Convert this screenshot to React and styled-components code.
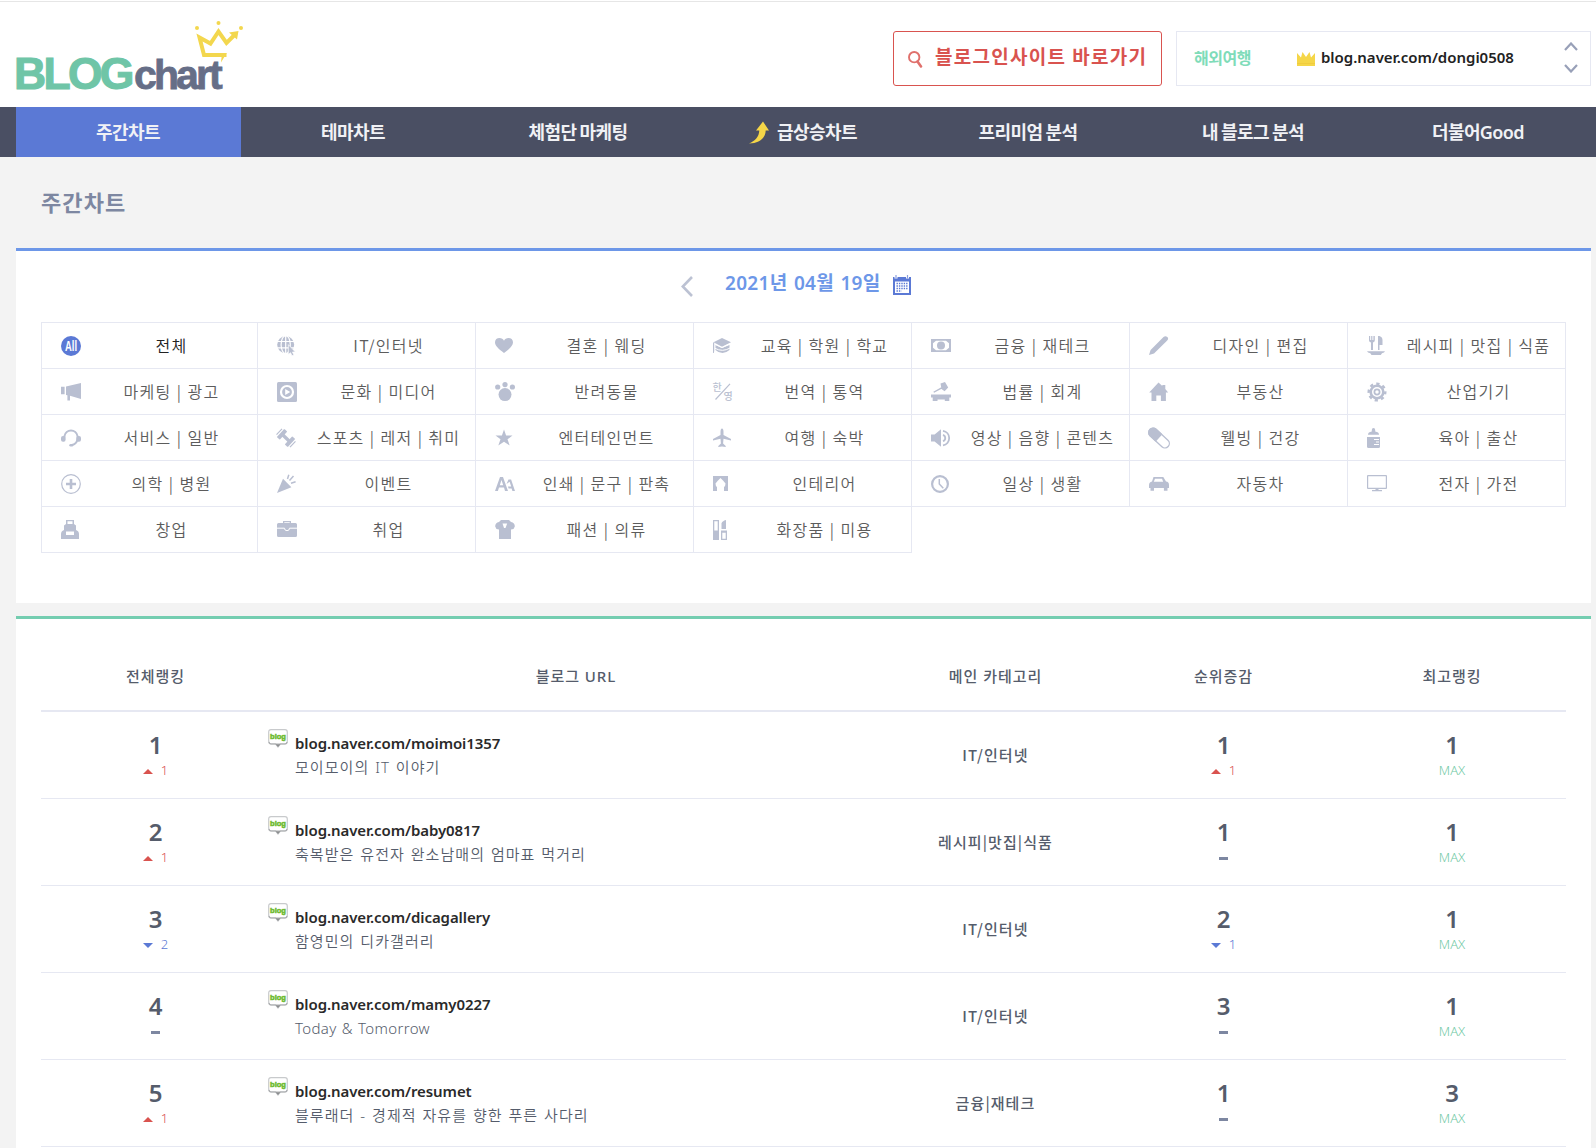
import React from "react";
import styled, { createGlobalStyle, css } from "styled-components";

const GlobalStyle = createGlobalStyle`
  * { box-sizing: border-box; }
  html, body { margin: 0; padding: 0; background: #f3f3f3; overflow: hidden; }
  body { font-family: "Noto Sans", "Noto Sans CJK KR", sans-serif; color: #555c6b; }
`;

const Page = styled.div`
  width: 1596px;
  height: 1148px;
  overflow: hidden;
`;

/* ---------- header ---------- */

const Header = styled.header`
  height: 107px;
  background: #fff;
  padding: 0 5px 0 10px;
  display: flex;
  justify-content: space-between;
  box-shadow: inset 0 1px 0 #fff, inset 0 2px 0 #e6e6e6;
`;

const Logo = styled.svg`
  display: block;
  width: 240px;
  height: 86px;
  margin-top: 16px;
  font-family: "Liberation Sans", Arial, sans-serif;
  font-weight: 700;
`;

const LogoBlog = styled.text`
  font-size: 44.5px;
  letter-spacing: -2.7px;
  fill: #6fc5a7;
  stroke: #6fc5a7;
  stroke-width: 1.1px;
`;

const LogoChart = styled.text`
  font-size: 41px;
  letter-spacing: -2.9px;
  fill: #666e87;
  stroke: #666e87;
  stroke-width: 0.8px;
`;

const HeaderTools = styled.div`
  display: flex;
  gap: 14px;
  padding-top: 31px;
`;

const InsightButton = styled.a`
  width: 269px;
  height: 55px;
  border: 1px solid #d9534f;
  border-radius: 3px;
  display: flex;
  align-items: center;
  padding-left: 14px;
  color: #d9534f;
  font-size: 19px;
  font-weight: 600;
  letter-spacing: 1.25px;
  white-space: nowrap;

  svg { margin: 2px 12px 0 0; }
  span { line-height: 24px; margin-bottom: 3px; }
`;

const Ticker = styled.div`
  width: 415px;
  height: 55px;
  border: 1px solid #e6e8f2;
  display: flex;
  align-items: center;
  padding: 0 12px 3px 17px;

  > svg { margin-top: 3px; }
`;

const TickerCategory = styled.span`
  width: 103px;
  color: #7fdcb9;
  font-size: 16px;
  font-weight: 700;
  letter-spacing: -0.5px;
`;

const TickerUrl = styled.a`
  flex: 1;
  margin: 0 0 1px 6px;
  color: #222;
  font-size: 15px;
  font-weight: 600;
  letter-spacing: -0.02px;
`;

const TickerArrows = styled.div`
  display: flex;
  flex-direction: column;
  gap: 13px;
`;

/* ---------- navigation ---------- */

const Nav = styled.nav`
  height: 50px;
  background: #4a4f63;
  padding: 0 5px 0 16px;
  display: flex;
`;

const NavItem = styled.a`
  width: 225px;
  height: 50px;
  display: flex;
  align-items: center;
  justify-content: center;
  gap: 8px;
  padding: 0 1px 2px 0;
  background: ${(p) => (p.$active ? "#5b79d5" : "transparent")};
  color: #f0f1f5;
  font-size: 18px;
  font-weight: 600;
  letter-spacing: -0.6px;
  word-spacing: -1px;
  white-space: nowrap;

  svg { margin-top: 2px; }
`;

/* ---------- content ---------- */

const Title = styled.h1`
  margin: 0;
  height: 91px;
  padding: 29px 0 0 41px;
  color: #7d87a1;
  font-size: 22px;
  line-height: 32px;
  font-weight: 600;
  letter-spacing: 1.1px;
`;

const Card = styled.section`
  width: 1575px;
  margin-left: 16px;
  background: #fff;
  border-top: 3px solid ${(p) => p.$accent};
  padding: 0 25px 40px 25px;
`;

const FilterCard = styled(Card)`
  height: 355px;
  margin-bottom: 13px;
`;

const DateBar = styled.div`
  height: 71px;
  display: flex;
  justify-content: center;
  padding: 17px 15px 0 0;
`;

const DateText = styled.span`
  width: 155px;
  margin: 1px 13px 0 32px;
  color: #6d97e8;
  font-size: 19px;
  line-height: 28px;
  font-weight: 600;
  letter-spacing: 0.3px;
  word-spacing: 1.2px;
  white-space: nowrap;
`;

const BarIcon = styled.span`
  margin-top: ${(p) => p.$top}px;
  line-height: 0;
`;

const CategoryGrid = styled.div`
  display: grid;
  grid-template-columns: 217px repeat(6, 218px);
  grid-template-rows: 47px;
  grid-auto-rows: 46px;
`;

const line = "1px solid #e6e8f2";

const Category = styled.a`
  display: flex;
  align-items: center;
  border-right: ${line};
  border-bottom: ${line};
  ${(p) => p.$top && css`border-top: ${line};`}
  ${(p) => p.$first && css`border-left: ${line};`}
  padding-left: 19px;
  color: ${(p) => (p.$active ? "#222" : "#5c5c5c")};
`;

const CategoryLabel = styled.span`
  flex: 1;
  margin-left: 5px;
  padding-bottom: 2px;
  text-align: center;
  font-family: "Noto Sans CJK KR", sans-serif;
  font-size: 16px;
  font-weight: 350;
  letter-spacing: 1.25px;
  word-spacing: 0.4px;
  white-space: nowrap;
`;

/* ---------- ranking table ---------- */

const Row = styled.div`
  display: grid;
  grid-template-columns: 229px 612px 227px 229px 228px;
  height: 87px;
  border-bottom: ${line};
`;

const HeadRow = styled(Row)`
  height: 93px;
  padding-top: 22px;
  align-items: center;
  border-bottom: 2px solid #e6e8f2;
  font-size: 15px;
  font-weight: 500;
  letter-spacing: 0.95px;
  text-align: center;
`;

const Stat = styled.div`
  padding-top: 21px;
  text-align: center;
`;

const StatValue = styled.div`
  font-size: 24px;
  line-height: 24px;
  font-weight: 600;
`;

const tones = { up: "#d9534f", down: "#5b79d5", max: "#6fc9a4", same: "#7d87a1" };

const StatNote = styled.div`
  display: flex;
  align-items: center;
  justify-content: center;
  gap: 8px;
  height: 24px;
  margin-top: 1px;
  font-size: 13px;
  font-weight: 300;
  color: ${(p) => tones[p.$tone]};
`;

const Triangle = styled.i`
  border: 5px solid transparent;
  border-top-width: ${(p) => (p.$down ? "5px" : "0")};
  border-bottom-width: ${(p) => (p.$down ? "0" : "5px")};
  border-top-color: ${(p) => (p.$down ? "currentColor" : "transparent")};
  border-bottom-color: ${(p) => (p.$down ? "transparent" : "currentColor")};
  margin-top: 3px;
`;

const Dash = styled.i`
  width: 9px;
  height: 3px;
  background: currentColor;
  margin-top: 3px;
`;

const BlogCell = styled.div`
  display: flex;
  gap: 7px;
  padding-top: 17px;
  margin-left: -2px;
`;

const BlogText = styled.div`
  padding-top: 2px;
`;

const BlogUrl = styled.div`
  color: #2a2a2a;
  font-size: 15px;
  line-height: 24px;
  font-weight: 600;
  letter-spacing: -0.08px;
`;

const BlogTitle = styled.div`
  font-size: 15px;
  line-height: 24px;
  font-weight: 350;
  letter-spacing: ${(p) => (p.$latin ? "0.35px" : "1.06px")};
  word-spacing: 0.9px;
`;

const MainCategory = styled.div`
  align-self: center;
  padding-bottom: 2px;
  text-align: center;
  font-family: "Noto Sans CJK KR", sans-serif;
  font-size: 15px;
  font-weight: 500;
  letter-spacing: 1.1px;
`;

/* ---------- icons ---------- */

const W = "#fff";
const glyphs = {
  all: (
    <>
      <circle cx="10" cy="10" r="10" fill="#5b79d5" />
      <text x="10" y="15.3" fill={W} fontSize="15" textAnchor="middle" textLength="12" lengthAdjust="spacingAndGlyphs" fontFamily="Liberation Sans" fontWeight="700">All</text>
    </>
  ),
  globe: (
    <>
      <circle cx="8.7" cy="8.7" r="8.5" />
      <g stroke={W} fill="none" strokeWidth="1.2">
        <path d="M8.7 0v18M0 5.5h18M0 11.8h18" />
        <ellipse cx="8.7" cy="8.7" rx="4.6" ry="9" />
      </g>
      <path d="M11.3 8.6v10l2.2-1.9 1.5 3.1 1.9-.9-1.4-2.9h2.9z" stroke={W} strokeWidth=".7" />
    </>
  ),
  heart: <path d="M9 17C4 13 0 10 0 6.200C0 3.600 2 2 4.500 2C6.500 2 8.200 3 9 4.800C9.800 3 11.500 2 13.500 2C16 2 18 3.600 18 6.200C18 10 14 13 9 17Z" />,
  cap: (
    <>
      <path d="M9 2 18 6.300 9 10.800.5 6.300Z" />
      <path d="M2.500 10.500V9L9 12l7.500-3v5Q13 17 9.500 17 5.500 17 2.500 14z" />
      <path d="M1 7.700 9 11.600 17 7.700M2 12.300Q9.500 16.500 17 12" stroke={W} strokeWidth="1" fill="none" />
      <path d="M0 6.500h1.200V15l-.4 2H0z" />
    </>
  ),
  money: (
    <>
      <path d="M0 3h20v13H0z" />
      <path d="M5 4.800h10l3 2.500v4.400l-3 2.500H5l-3-2.500V7.300z" fill={W} />
      <circle cx="10" cy="9.500" r="4" />
    </>
  ),
  pencil: <path d="M0 19 1.600 14 14.500 1Q16.500-.6 18.300 1T18 4.700L5 17.400Z" />,
  meal: (
    <path d="M2 0h1.200v4h1V0h1.200v4h1V0h1.400v4.500Q7.800 6 6 6.600V14H4V6.600Q2 6 2 4.500zM11 0h1.500v14H11zM12.500 0Q15.500 1 15.500 4v5h-3zM0 15.300h18Q17.500 17 15 17.300L13.800 19H4.500L3.300 17.300Q.5 17 0 15.300z" />
  ),
  megaphone: <path d="M0 4.800h3.600v7.400H0zM5 4.400 20 .9v16L9 13.800v4.800H6.400v-5.300L5 13z" />,
  media: (
    <>
      <rect width="20" height="20" rx="1.500" />
      <circle cx="10" cy="10" r="6" fill="none" stroke={W} strokeWidth="2.200" />
      <path d="M8.200 7v6l5-3z" fill={W} />
    </>
  ),
  paw: (
    <>
      <circle cx="10" cy="12.600" r="6.500" />
      <circle cx="2.700" cy="5" r="2.600" />
      <circle cx="10" cy="2.600" r="2.600" />
      <circle cx="17.400" cy="5" r="2.600" />
    </>
  ),
  translate: (
    <>
      <text x="-.5" y="9" fontSize="10" fontWeight="500" fontFamily="Noto Sans CJK KR">한</text>
      <text x="10.500" y="18" fontSize="10" fontWeight="500" fontFamily="Noto Sans CJK KR">영</text>
      <path d="M2.500 17.500 17 1.800" stroke="currentColor" strokeWidth="1.200" />
    </>
  ),
  gavel: (
    <>
      <path d="M0 12.500h20v3h-1.700V19h-4.500v-1.600H6.500V19H1.700v-3.500H0z" />
      <path d="m2.300 9.800 8-4.500.8 1.300-8 4.200zM9.500 1.500 14 0l3.200 5.500-3.600 3.800L10.500 7z" />
    </>
  ),
  house: <path d="M9.500.5 13.300 4V2.900h3V7l2.900 3.600h-2.300V19h-5v-5.600H7.300V19H2.500v-8.400H.2z" />,
  gear: (
    <>
      <circle cx="10" cy="10" r="6.300" fill="none" stroke="currentColor" strokeWidth="2.600" />
      <circle cx="10" cy="10" r="8.300" fill="none" stroke="currentColor" strokeWidth="2.400" strokeDasharray="3.260 3.260" strokeDashoffset="1" />
      <circle cx="10" cy="10" r="2.600" fill="none" stroke="currentColor" strokeWidth="1.700" />
    </>
  ),
  headset: (
    <>
      <path d="M3.500 9.500V8a6.600 6.600 0 0 1 13 0v2q0 6-5.500 7" fill="none" stroke="currentColor" strokeWidth="1.900" />
      <rect x="0" y="8" width="4.600" height="5.800" rx="2" />
      <rect x="15.400" y="8" width="4.600" height="5.800" rx="2" />
      <rect x="8.300" y="16" width="4" height="2.600" rx="1.300" />
    </>
  ),
  dumbbell: (
    <g transform="rotate(43 9 10)">
      <rect x="4" y="8.300" width="10" height="3.400" />
      <rect x="1.600" y="4.500" width="4" height="11" rx=".6" />
      <rect x="12.400" y="4.500" width="4" height="11" rx=".6" />
      <path d="M-.2 6v8M18.200 6v8" stroke="currentColor" strokeWidth="1.200" />
    </g>
  ),
  star: <path d="m9 1.500 2.100 6h6.400l-5 3.800 2.200 6.200L9 13.700 3.300 17.500l2.200-6.200-5-3.800h6.400z" />,
  plane: <path d="M9 .4q1.500 0 1.500 3.600v3l7.500 4v1.400l-7.500-1.600-.4 4.700 2.600 2.500v1.100L9 18.500l-3.700.6V18l2.600-2.500-.4-4.700L0 12.400V11l7.500-4V4Q7.500.4 9 .4z" />,
  speaker: (
    <>
      <path d="M0 6.500h3.600L10 1.200v17.600L3.600 13.500H0z" />
      <path d="M12 2.800a7.400 7.400 0 0 1 0 14.600" fill="none" stroke="currentColor" strokeWidth="1.800" />
      <path d="M12 6.800a3.400 3.400 0 0 1 0 6.400" fill="none" stroke="currentColor" strokeWidth="1.800" />
    </>
  ),
  pill: (
    <g transform="rotate(43 10 10)">
      <rect x="-2.500" y="5.600" width="25" height="8.800" rx="4.400" fill="none" stroke="currentColor" strokeWidth="1.300" />
      <path d="M1.900 5H10v10H1.900a5 5 0 0 1 0-10z" />
    </g>
  ),
  bottle: (
    <>
      <path d="M4.800 2Q4.800 0 6.500 0T8.200 2v1.500Q12 4.200 12 6.500v.3H1v-.3Q1 4.200 4.800 3.500z" />
      <path d="M0 9h13v9.500q0 1.500-1.500 1.500h-10Q0 20 0 18.500z" />
      <path d="M7 11.500h5M9 14h3M7 16.500h5" stroke={W} strokeWidth="1.200" />
    </>
  ),
  medical: (
    <>
      <circle cx="10" cy="10" r="9.300" fill="none" stroke="currentColor" strokeWidth="1.200" />
      <path d="M10 5v10M5 10h10" stroke="currentColor" strokeWidth="2.600" />
    </>
  ),
  party: (
    <>
      <path d="M0 19 6 4.800l8.400 8.400z" />
      <path d="M10.500 5 11.800.8M12.500 6.500l4-4.500M14 9.200l4.600-1.500" stroke="currentColor" strokeWidth="1.500" />
    </>
  ),
  print: (
    <>
      <path fillRule="evenodd" d="M0 17 5 3h3l5 14h-3l-1-3.400H4L2.900 17zM4.800 11.200h3.400L6.500 6z" />
      <path fillRule="evenodd" d="m11.500 10 2-4.500h2.600L20 17h-2.600l-.8-2.500h-3l-.6-2h3.200l-1.600-4.700z" />
    </>
  ),
  interior: (
    <>
      <path d="M0 2h15v15H0z" />
      <path d="M7.500 4 10 6.500l2.500 3Q12.500 12 11 13v4H4v-4Q2.500 12 2.500 9.500l2.500-3z" fill={W} />
    </>
  ),
  clock: (
    <>
      <circle cx="9" cy="10" r="7.900" fill="none" stroke="currentColor" strokeWidth="2.200" />
      <path d="M8.300 5v5l4 4.200" fill="none" stroke="currentColor" strokeWidth="1.500" />
    </>
  ),
  car: (
    <path fillRule="evenodd" d="M4.500 3h9.800l2.700 4.600q3 .4 3 3.400v3h-1.500v2.700h-3.600V14H5v2.700H1.500V14H0v-3q0-2.600 3-3.400zM6 4.700 4.800 7.800h9.400L13 4.700z" />
  ),
  monitor: <path fillRule="evenodd" d="M1 1h18q1 0 1 1v12q0 1-1 1h-7.500v1H15v1.200H5V16h3.500v-1H1q-1 0-1-1V2q0-1 1-1zM1.200 2.200v11.600h17.600V2.200z" />,
  backpack: (
    <path fillRule="evenodd" d="M5 0h8v4l2 1.500V10q3 1 3 4v5H0v-5q0-3 3-4V5.500L5 4zM6.500 1.300V4h5V1.300zM5 11.500V15h8v-3.500z" />
  ),
  briefcase: (
    <>
      <path fillRule="evenodd" d="M6 3V1h8v2h4.500Q20 3 20 4.500v11q0 1.500-1.500 1.500h-17Q0 17 0 15.500v-11Q0 3 1.500 3zM7.300 3h5.400v-.8H7.300z" />
      <path d="M0 8.200h7.500q0 2.500 2.500 2.500t2.500-2.500H20" fill="none" stroke={W} strokeWidth="1" />
    </>
  ),
  shirt: (
    <>
      <path d="M6 0h8l2 2q4 1 3.800 4.500L18.500 9 16 9.500V19H4V9.500L1.500 9 .2 6.500Q0 3 4 2z" />
      <path d="M7.500 3.500 9 8h1.500l1.700-4.500z" fill={W} />
    </>
  ),
  cosmetics: (
    <>
      <path fillRule="evenodd" d="M0 0h6v20H0zM1.300 1.200v9.300h3.400V1.200z" />
      <path d="M8.500 9V3.500Q9 1 13 0v9z" />
      <path fillRule="evenodd" d="M8 10.500h6V20H8zM9.300 12.700v6h3.400v-6z" />
    </>
  ),
};

const Glyph = styled.svg`
  width: 20px;
  height: 20px;
  flex: none;
  overflow: visible;
  color: #b9bfd1;
  fill: currentColor;
`;

const BlogBadge = () => (
  <svg width="20" height="19" viewBox="0 0 20 19">
    <path d="M3 .7h14Q19.300.7 19.300 3v9.500q0 2.300-2.300 2.300h-4.500L10 18l-2.500-3.200H3Q.7 14.800.7 12.500V3Q.7.7 3 .7z" fill="#fff" stroke="#c8cacc" strokeWidth="1.200" />
    <path d="M1 13Q1.500 15 3 15h14q1.700 0 2-2" fill="none" stroke="#abadb0" strokeWidth="1.200" />
    <path d="M7.500 15.200h5L10 18z" fill="#8c8e90" />
    <text x="10" y="10.300" textAnchor="middle" textLength="16" lengthAdjust="spacingAndGlyphs" fontSize="7.500" fontWeight="900" fill="#6dba2e" stroke="#6dba2e" strokeWidth=".5" fontFamily="Liberation Sans">blog</text>
  </svg>
);

/* ---------- data ---------- */

const navItems = [
  { label: "주간차트", active: true },
  { label: "테마차트" },
  { label: "체험단 마케팅" },
  { label: "급상승차트", hot: true },
  { label: "프리미엄 분석" },
  { label: "내 블로그 분석" },
  { label: "더불어Good" },
];

const categories = [
  ["all", "전체"], ["globe", "IT/인터넷"], ["heart", "결혼 | 웨딩"], ["cap", "교육 | 학원 | 학교"],
  ["money", "금융 | 재테크"], ["pencil", "디자인 | 편집"], ["meal", "레시피 | 맛집 | 식품"],
  ["megaphone", "마케팅 | 광고"], ["media", "문화 | 미디어"], ["paw", "반려동물"], ["translate", "번역 | 통역"],
  ["gavel", "법률 | 회계"], ["house", "부동산"], ["gear", "산업기기"],
  ["headset", "서비스 | 일반"], ["dumbbell", "스포츠 | 레저 | 취미"], ["star", "엔터테인먼트"], ["plane", "여행 | 숙박"],
  ["speaker", "영상 | 음향 | 콘텐츠"], ["pill", "웰빙 | 건강"], ["bottle", "육아 | 출산"],
  ["medical", "의학 | 병원"], ["party", "이벤트"], ["print", "인쇄 | 문구 | 판촉"], ["interior", "인테리어"],
  ["clock", "일상 | 생활"], ["car", "자동차"], ["monitor", "전자 | 가전"],
  ["backpack", "창업"], ["briefcase", "취업"], ["shirt", "패션 | 의류"], ["cosmetics", "화장품 | 미용"],
];

const blogs = [
  { rank: 1, move: 1, url: "blog.naver.com/moimoi1357", title: "모이모이의 IT 이야기", category: "IT/인터넷", catRank: 1, catMove: 1, best: 1 },
  { rank: 2, move: 1, url: "blog.naver.com/baby0817", title: "축복받은 유전자 완소남매의 엄마표 먹거리", category: "레시피|맛집|식품", catRank: 1, catMove: 0, best: 1 },
  { rank: 3, move: -2, url: "blog.naver.com/dicagallery", title: "함영민의 디카갤러리", category: "IT/인터넷", catRank: 2, catMove: -1, best: 1 },
  { rank: 4, move: 0, url: "blog.naver.com/mamy0227", title: "Today & Tomorrow", latin: true, category: "IT/인터넷", catRank: 3, catMove: 0, best: 1 },
  { rank: 5, move: 1, url: "blog.naver.com/resumet", title: "블루래더 - 경제적 자유를 향한 푸른 사다리", category: "금융|재테크", catRank: 1, catMove: 0, best: 3 },
];

const Movement = ({ value }) => {
  if (value === 0) return <StatNote $tone="same"><Dash /></StatNote>;
  return (
    <StatNote $tone={value > 0 ? "up" : "down"}>
      <Triangle $down={value < 0} />
      <span>{Math.abs(value)}</span>
    </StatNote>
  );
};

export default function App() {
  return (
    <Page>
      <GlobalStyle />
      <Header>
        <Logo viewBox="10 16 240 86">
          <LogoBlog x="14" y="88.900">BLOG</LogoBlog>
          <LogoChart x="134" y="88.900">chart</LogoChart>
          <path d="M226.500 55H204L199.500 37.500 210.500 43.500 218.500 31.500 226.500 43 235 34.500" fill="none" stroke="#f3d74e" strokeWidth="4" />
          <path d="M222 53h4.700L221 62.500z M229 32.500l9.500-1.500-1.500 8.500z" fill="#f3d74e" />
          <circle cx="197" cy="28" r="2" fill="#f3d74e" />
          <circle cx="218.500" cy="23" r="2" fill="#f3d74e" />
          <circle cx="241" cy="28" r="2" fill="#f3d74e" />
        </Logo>
        <HeaderTools>
          <InsightButton>
            <svg width="15" height="17" viewBox="0 0 15 17" fill="none" stroke="#e0706c">
              <circle cx="6.200" cy="6.200" r="5.200" strokeWidth="1.900" />
              <path d="M9.500 10.500 13 15.500" strokeWidth="2.600" strokeLinecap="round" />
            </svg>
            <span>블로그인사이트 바로가기</span>
          </InsightButton>
          <Ticker>
            <TickerCategory>해외여행</TickerCategory>
            <svg width="18" height="14" viewBox="0 0 18 14">
              <path d="M0 1 4 5.500 5.500 0 9 5 12.500 0 14 5.500 18 1V14H0z" fill="#f5d648" />
              <path d="M0 11.500h18" stroke="#f0c93c" strokeWidth=".8" />
            </svg>
            <TickerUrl>blog.naver.com/dongi0508</TickerUrl>
            <TickerArrows>
              <svg width="14" height="9" viewBox="0 0 14 9" fill="none" stroke="#98a0b8" strokeWidth="2.200"><path d="M1 8l6-6.500L13 8" /></svg>
              <svg width="14" height="9" viewBox="0 0 14 9" fill="none" stroke="#98a0b8" strokeWidth="2.200"><path d="M1 1l6 6.500L13 1" /></svg>
            </TickerArrows>
          </Ticker>
        </HeaderTools>
      </Header>

      <Nav>
        {navItems.map((n) => (
          <NavItem key={n.label} $active={n.active}>
            {n.hot && (
              <svg width="20" height="23" viewBox="0 0 20 23">
                <path d="M14 .5 20 9.500h-3.300C16.500 16.500 11 22.500 0 22.500c6-2.500 10-6.500 10.300-13H7z" fill="#f5d648" />
              </svg>
            )}
            <span>{n.label}</span>
          </NavItem>
        ))}
      </Nav>

      <Title>주간차트</Title>

      <FilterCard $accent="#6d97e8">
        <DateBar>
          <BarIcon $top={8}>
            <svg width="12" height="21" viewBox="0 0 12 21" fill="none" stroke="#bcc2d3" strokeWidth="2.600"><path d="M11 1 1.800 10.500 11 20" /></svg>
          </BarIcon>
          <DateText>2021년 04월 19일</DateText>
          <BarIcon $top={7}>
            <svg width="18" height="20" viewBox="0 0 18 20">
              <path d="M0 2h18v18H0z" fill="#5b79d5" />
              <path d="M2 6.500h14V18H2z" fill="#fff" />
              <path d="M3 0v3.500M14.500 0v3.500" stroke="#fff" strokeWidth="3" />
              <path d="M3 0v3.500M14.500 0v3.500" stroke="#8b9fe0" strokeWidth="1.200" />
              <path d="M3.500 8.500h11M3.500 11h11M3.500 13.500h11M3.500 16h5" stroke="#5b79d5" strokeWidth="1.300" strokeDasharray="1.400 1" />
            </svg>
          </BarIcon>
        </DateBar>
        <CategoryGrid>
          {categories.map(([icon, label], i) => (
            <Category key={icon} $top={i < 7} $first={i % 7 === 0} $active={i === 0}>
              <Glyph viewBox="0 0 20 20">{glyphs[icon]}</Glyph>
              <CategoryLabel>{label}</CategoryLabel>
            </Category>
          ))}
        </CategoryGrid>
      </FilterCard>

      <Card $accent="#74cdb0">
        <HeadRow>
          <span>전체랭킹</span>
          <span>블로그 URL</span>
          <span>메인 카테고리</span>
          <span>순위증감</span>
          <span>최고랭킹</span>
        </HeadRow>
        {blogs.map((b) => (
          <Row key={b.rank}>
            <Stat>
              <StatValue>{b.rank}</StatValue>
              <Movement value={b.move} />
            </Stat>
            <BlogCell>
              <BlogBadge />
              <BlogText>
                <BlogUrl>{b.url}</BlogUrl>
                <BlogTitle $latin={b.latin}>{b.title}</BlogTitle>
              </BlogText>
            </BlogCell>
            <MainCategory>{b.category}</MainCategory>
            <Stat>
              <StatValue>{b.catRank}</StatValue>
              <Movement value={b.catMove} />
            </Stat>
            <Stat>
              <StatValue>{b.best}</StatValue>
              <StatNote $tone="max">MAX</StatNote>
            </Stat>
          </Row>
        ))}
      </Card>
    </Page>
  );
}
